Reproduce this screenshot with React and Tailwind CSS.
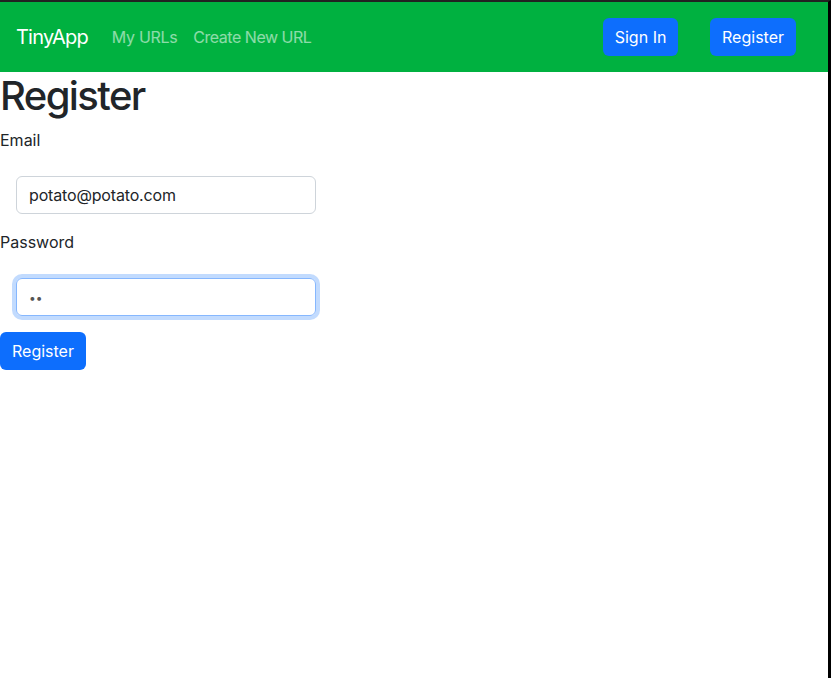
import { useState } from "react";

const font = { fontFamily: "Inter, 'Noto Sans', sans-serif" };

function Navbar() {
  return (
    <nav className="flex items-center justify-between h-[70px] bg-[#00b140] pl-4 pr-8">
      <div className="flex items-center">
        <a href="#" className="text-[20px] tracking-[-0.04em] text-white mr-6">
          TinyApp
        </a>
        <a href="#" className="text-base tracking-[-0.02em] text-white/55 mr-4">
          My URLs
        </a>
        <a href="#" className="text-base tracking-[-0.03em] text-white/55">
          Create New URL
        </a>
      </div>
      <div className="flex items-center gap-8">
        <button className="h-[38px] w-[75px] rounded-md bg-[#0d6efd] text-white text-base">
          Sign In
        </button>
        <button className="h-[38px] px-3 rounded-md bg-[#0d6efd] text-white text-base">
          Register
        </button>
      </div>
    </nav>
  );
}

function App() {
  const [email, setEmail] = useState("potato@potato.com");
  const [password, setPassword] = useState("ab");

  return (
    <div
      className="min-h-screen bg-white border-t-2 border-t-[#222] border-r-[3px] border-r-black text-[#212529]"
      style={font}
    >
      <Navbar />
      <h1 className="text-[40px] leading-[48px] font-medium tracking-[-0.04em] mb-2">
        Register
      </h1>
      <form onSubmit={(e) => e.preventDefault()}>
        <label className="block text-base leading-6">Email</label>
        <input
          type="text"
          value={email}
          onChange={(e) => setEmail(e.target.value)}
          className="block w-[300px] h-[38px] mt-6 mb-4 ml-4 px-3 border border-[#ced4da] rounded-md text-base tracking-[-0.01em] text-[#212529] outline-none"
        />
        <label className="block text-base leading-6">Password</label>
        <input
          type="password"
          value={password}
          onChange={(e) => setPassword(e.target.value)}
          className="block w-[300px] h-[38px] mt-6 mb-4 ml-4 px-3 border border-[#86b7fe] rounded-md text-[12px] text-[#555] outline-none shadow-[0_0_0_4px_rgba(13,110,253,0.25)]"
        />
        <button
          type="submit"
          className="h-[38px] px-3 rounded-md bg-[#0d6efd] text-white text-base"
        >
          Register
        </button>
      </form>
    </div>
  );
}

export default App;
